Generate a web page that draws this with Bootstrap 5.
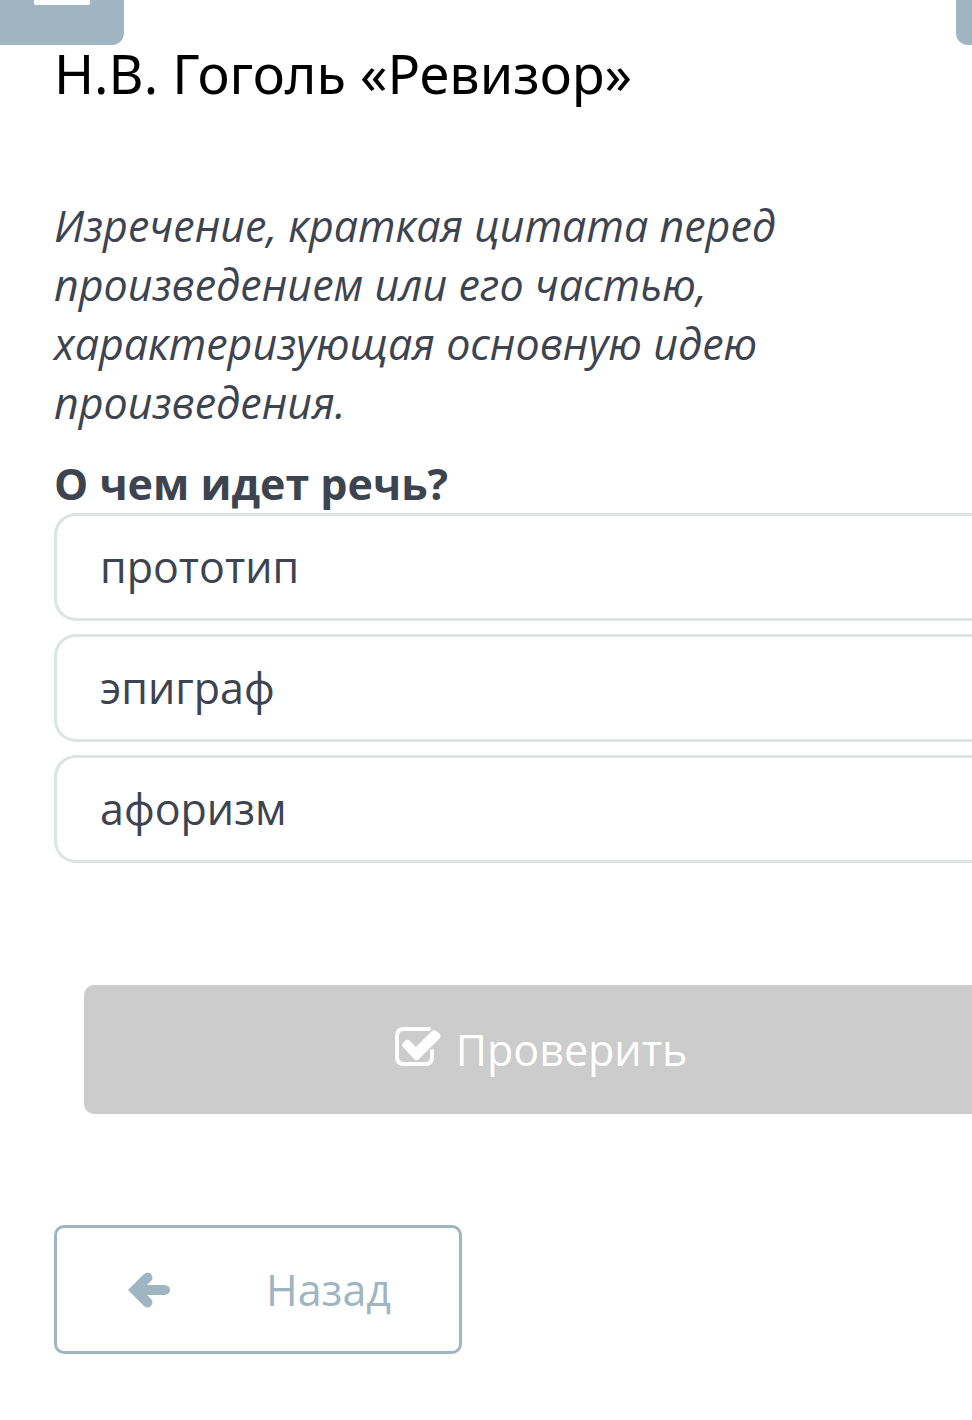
<!DOCTYPE html>
<html lang="ru">
<head>
<meta charset="utf-8">
<meta name="viewport" content="width=device-width, initial-scale=1">
<title>Н.В. Гоголь «Ревизор»</title>
<link href="https://cdn.jsdelivr.net/npm/bootstrap@5.3.0/dist/css/bootstrap.min.css" rel="stylesheet">
<style>
body{font-family:"Open Sans",sans-serif;color:#3d444f;background:#fff;font-size:43px;line-height:59px;overflow-x:hidden}
.top-tab{background:#a0b5c2;border:0;height:45px;width:124px;border-radius:0 0 12px 0;padding:0}
.top-tab.next-tab{width:16px;border-radius:0 0 0 12px}
.lesson{padding-left:54px}
.lesson-title{font-family:"Noto Sans","Open Sans",sans-serif;font-size:54px;line-height:56px;color:#000;font-weight:400;margin-bottom:95px}
.definition{margin-bottom:22px}
.question{font-size:43px;line-height:59px}
.answer{border:3px solid #dce4e4;border-right:0;border-radius:22px 0 0 22px;height:108px;padding:0 0 2px 43px;margin-bottom:13px;cursor:pointer}
.answer:focus-within{border-color:#a0b5c2}
.check-btn,.check-btn:disabled{background:#ccc;color:#fff;border:0;opacity:1;border-radius:10px 0 0 10px;height:129px;font-size:43px;line-height:59px;margin:109px 0 111px 30px;padding:0 60px 0 86px;gap:13px}
.back-btn{border:3px solid #a0b5c2;color:#a0b5c2;border-radius:10px;width:408px;height:129px;font-size:43px;line-height:59px;padding:0 68px 0 70px}
</style>
</head>
<body>
<header class="d-flex justify-content-between">
<button class="top-tab" type="button" aria-label="Меню"><svg class="d-block" width="124" height="45"><rect x="34" y="-4" width="56" height="9" rx="2" fill="#fff"/></svg></button>
<button class="top-tab next-tab" type="button" aria-label="Дальше"></button>
</header>
<main class="lesson">
<h1 class="lesson-title">Н.В. Гоголь «Ревизор»</h1>
<p class="definition fst-italic col-10">Изречение, краткая цитата перед произведением или его частью, характеризующая основную идею произведения.</p>
<form>
<fieldset>
<legend class="question fw-bold mb-0">О чем идет речь?</legend>
<label class="answer d-flex align-items-center"><input class="visually-hidden" type="radio" name="answer">прототип</label>
<label class="answer d-flex align-items-center"><input class="visually-hidden" type="radio" name="answer">эпиграф</label>
<label class="answer d-flex align-items-center"><input class="visually-hidden" type="radio" name="answer">афоризм</label>
</fieldset>
<div class="d-flex"><button class="check-btn btn d-flex align-items-center justify-content-center flex-grow-1" type="button" disabled><svg width="48" height="46" viewBox="0 0 48 46" aria-hidden="true"><path d="M34 2H9Q2 2 2 9V30Q2 37 9 37H30Q37 37 37 30V24" fill="none" stroke="#fff" stroke-width="4" stroke-linecap="round"/><path d="M8 16L11 13Q13 12 15 14L21 20L37 4Q39 2 41 4L45 7Q46 9 45 11L23 33Q21 34 19 32L8 20Q6 18 8 16Z" fill="#fff"/></svg>Проверить</button></div>
</form>
<button class="back-btn btn d-flex align-items-center justify-content-between" type="button"><svg width="44" height="36" viewBox="0 0 44 36" aria-hidden="true"><path d="M1 18L17 2Q21-1 24 2Q27 6 24 9L20 13H38Q43 14 43 18Q43 22 38 23H20L24 27Q27 30 24 34Q21 37 17 34Z" fill="#a0b5c2"/></svg>Назад</button>
</main>
<script src="https://cdn.jsdelivr.net/npm/bootstrap@5.3.0/dist/js/bootstrap.bundle.min.js"></script>
</body>
</html>
